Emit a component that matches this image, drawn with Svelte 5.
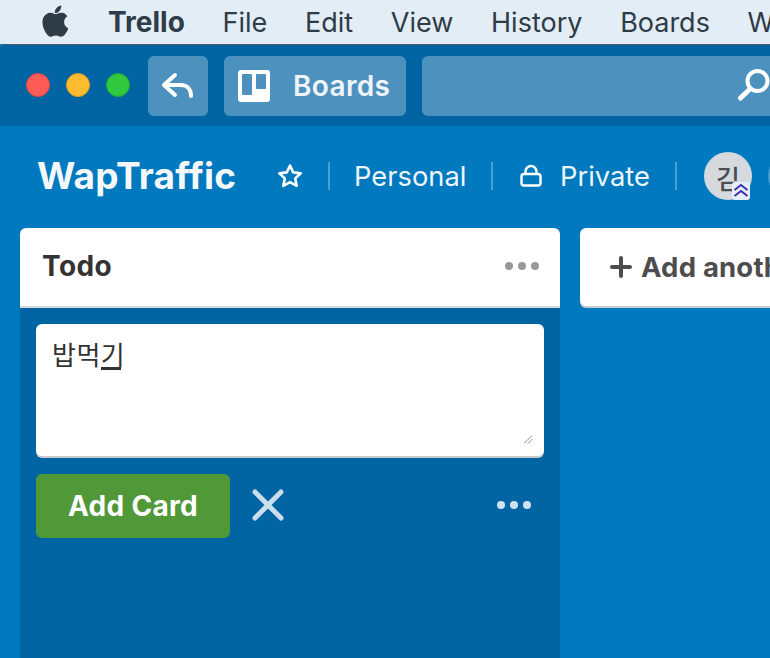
<script>
  const menus = ['File', 'Edit', 'View', 'History', 'Boards', 'Window'];
</script>

<div class="app">
  <nav class="menubar">
    <svg class="apple" width="28" height="32" viewBox="0 0 28 32"><path d="M19.3 0.5c.2 2-.6 3.9-1.700 5.300-1.200 1.400-3 2.500-4.800 2.300-.2-1.900.7-3.900 1.800-5.100C15.800 1.600 17.700.6 19.300.5zM25.500 11.200c-.2.100-3.500 2-3.400 5.900 0 4.600 4.100 6.200 4.200 6.200-.1.100-.7 2.300-2.200 4.500-1.300 1.900-2.700 3.800-4.900 3.900-2.100 0-2.800-1.300-5.200-1.300s-3.200 1.200-5.100 1.300c-2.100.1-3.700-2.100-5.100-4-2.700-3.900-4.800-11.100-2-16 1.400-2.400 3.900-3.900 6.600-4 2-.1 4 1.400 5.200 1.400 1.300 0 3.500-1.700 6-1.400 1 0 3.900.4 5.800 3.500z" fill="#2f3b46"/></svg>
    <span class="menu app-name">Trello</span>
    {#each menus as m}<span class="menu">{m}</span>{/each}
  </nav>

  <header class="topbar">
    <div class="lights">
      <i class="red"></i><i class="amber"></i><i class="green"></i>
    </div>
    <button class="tb back" aria-label="Back">
      <svg width="34" height="28" viewBox="0 0 34 28" fill="none" stroke="#fff" stroke-width="4" stroke-linecap="round" stroke-linejoin="round"><path d="M14 3 3 13l11 10M3 13h17c6 0 10 4 10 11"/></svg>
    </button>
    <button class="tb boards">
      <svg width="32" height="32" viewBox="0 0 32 32"><path fill-rule="evenodd" fill="#fff" d="M3 0h26a3 3 0 0 1 3 3v26a3 3 0 0 1-3 3H3a3 3 0 0 1-3-3V3a3 3 0 0 1 3-3zM5 4a1 1 0 0 0-1 1v19a1 1 0 0 0 1 1h8a1 1 0 0 0 1-1V5a1 1 0 0 0-1-1zM19 4a1 1 0 0 0-1 1v13a1 1 0 0 0 1 1h8a1 1 0 0 0 1-1V5a1 1 0 0 0-1-1z"/></svg>
      <span>Boards</span>
    </button>
    <div class="search">
      <svg width="34" height="34" viewBox="0 0 34 34" fill="none" stroke="#fff" stroke-linecap="round"><circle cx="20.500" cy="13" r="10" stroke-width="4"/><path d="M13 21 3.500 30" stroke-width="5"/></svg>
    </div>
  </header>

  <main class="board">
    <div class="board-head">
      <h1>WapTraffic</h1>
      <svg class="star" width="26" height="26" viewBox="0 0 26 26" fill="none" stroke="#fff" stroke-width="2.600" stroke-linejoin="round"><path d="m13 2.500 3.200 6.900 7.500.9-5.500 5.100 1.500 7.400-6.700-3.700-6.700 3.700 1.500-7.400-5.500-5.100 7.500-.9z"/></svg>
      <span class="sep sep1"></span>
      <span class="hd-text personal">Personal</span>
      <span class="sep sep2"></span>
      <svg class="lock" width="22" height="24" viewBox="0 0 22 24" fill="none" stroke="#fff" stroke-width="2.400"><rect x="1.500" y="10" width="19" height="11.500" rx="2.500"/><path d="M5.500 10V7.500a5.500 5.500 0 0 1 11 0V10"/></svg>
      <span class="hd-text private">Private</span>
      <span class="sep sep3"></span>
      <div class="avatar">
        <span class="initial">김</span>
        <div class="badge">
          <svg width="18" height="18" viewBox="0 0 18 18" fill="none" stroke="#3a2fb0" stroke-width="2"><path d="m2.500 8 6.500-5 6.500 5M2.500 14 9 9l6.500 5"/></svg>
        </div>
      </div>
      <div class="avatar second"></div>
    </div>

    <div class="lists">
      <section class="list">
        <div class="list-head">
          <h2>Todo</h2>
          <div class="dots grey"><i></i><i></i><i></i></div>
        </div>
        <div class="list-body">
          <div class="composer">
            밥먹<span class="composing">기</span>
            <svg class="grip" width="9" height="9" viewBox="0 0 9 9" stroke="#555" stroke-width="1" stroke-dasharray="1.500 .7" fill="none"><path d="M0 8.500 8.500 0M4 8.500 8.500 4"/></svg>
          </div>
          <div class="actions">
            <button class="add">Add Card</button>
            <svg class="close" width="32" height="32" viewBox="0 0 32 32" stroke="#c9dfee" stroke-width="5" stroke-linecap="round"><path d="M3 3l26 26M29 3 3 29"/></svg>
            <div class="dots light"><i></i><i></i><i></i></div>
          </div>
        </div>
      </section>
      <div class="add-list">
        <svg width="22" height="22" viewBox="0 0 22 22" stroke="#4d4d4d" stroke-width="4" stroke-linecap="round"><path d="M11 2v18M2 11h18"/></svg>
        <span>Add another list</span>
      </div>
    </div>
  </main>
</div>

<style>
  :global(body) { margin: 0; background: #0079bf; }
  .app { width: 770px; height: 658px; overflow: hidden; display: flex; flex-direction: column; font-family: Inter, "Noto Sans CJK KR", sans-serif; }

  .menubar { height: 44px; flex: none; box-sizing: border-box; background: #e3edf6; display: flex; align-items: center; white-space: nowrap; padding-left: 42px; }
  .apple { flex: none; margin-right: 38px; margin-top: -2px; }
  .menu { font-size: 27px; color: #2f3b46; margin-right: 37.700px; flex: none; }
  .app-name { font-weight: 700; font-size: 28px; }

  .topbar { height: 82px; flex: none; box-sizing: border-box; background: #0164a3; border-top: 1px solid #4a5a68; border-top-left-radius: 6px; display: flex; align-items: flex-start; padding: 11px 0 0 26px; gap: 16px; overflow: hidden; }
  .lights { display: flex; gap: 16px; margin-top: 17px; margin-right: 2px; }
  .lights i { width: 24px; height: 24px; border-radius: 50%; display: block; box-sizing: border-box; }
  .red { background: #fc5b57; border: 1px solid #e3443f; }
  .amber { background: #fdbb2f; border: 1px solid #e09e1e; }
  .green { background: #32c840; border: 1px solid #1fad2d; }
  .tb { border: 0; background: #4d92bf; border-radius: 6px; height: 60px; display: flex; align-items: center; padding: 0; color: #f0f4f8; font: inherit; flex: none; }
  .back { width: 60px; justify-content: center; }
  .boards { width: 182px; padding-left: 14px; gap: 23px; font-size: 28px; font-weight: 600; letter-spacing: 0.35px; box-sizing: border-box; }
  .search { width: 500px; height: 60px; flex: none; background: #4d92bf; border-radius: 6px; position: relative; }
  .search svg { position: absolute; left: 315px; top: 12px; }

  .board { flex: 1; background: #0079bf; min-height: 0; display: flex; flex-direction: column; }
  .board-head { height: 102px; flex: none; display: flex; align-items: center; position: relative; padding: 0 0 2px 37px; box-sizing: border-box; white-space: nowrap; color: #fff; }
  h1 { margin: -1px 0 0; font-size: 37px; font-weight: 650; letter-spacing: 0.25px; color: #f4f8fb; width: 240px; flex: none; }
  .star { flex: none; margin-right: 25px; }
  .sep { width: 2px; height: 28px; background: #4d9fd2; flex: none; }
  .hd-text { font-size: 27.300px; color: #eef5fa; flex: none; }
  .personal { margin: 0 26px 0 24px; width: 111px; }
  .lock { flex: none; margin: 0 18px 0 27px; }
  .private { width: 89px; }
  .sep3 { margin: 0 27px 0 26px; }
  .avatar { width: 48px; height: 48px; border-radius: 50%; background: #d6dadf; flex: none; position: relative; display: flex; align-items: center; justify-content: center; font-size: 26px; color: #4a4f55; font-weight: 500; }
  .initial { padding-top: 2px; }
  .avatar.second { margin-left: 16px; background: #4d9fd2; }
  .badge { position: absolute; right: 2px; bottom: 0; width: 18px; height: 18px; background: #e8eef6; border-radius: 3px; display: flex; }

  .lists { flex: 1; min-height: 0; display: flex; gap: 20px; padding-left: 20px; align-items: flex-start; }
  .list { width: 540px; flex: none; align-self: stretch; height: 430px; background: #0164a3; border-radius: 6px 6px 0 0; }
  .list-head { height: 80px; box-sizing: border-box; background: #fff; border-bottom: 2px solid #d6d9dc; border-radius: 6px 6px 0 0; display: flex; align-items: center; justify-content: space-between; padding: 0 21px 2px 22px; }
  h2 { margin: 0; font-size: 28px; font-weight: 700; letter-spacing: 0.4px; color: #333; }
  .dots { display: flex; gap: 5px; }
  .dots i { width: 8px; height: 8px; border-radius: 50%; display: block; }
  .grey i { background: #999; }
  .light i { background: #cfe2f0; }
  .list-body { padding: 16px 16px 0; }
  .composer { height: 132px; box-sizing: border-box; background: #fff; border-radius: 6px; box-shadow: 0 2px 0 #c8cbce; padding: 13px 16px; font-size: 26px; letter-spacing: 0.5px; line-height: 34px; color: #333; font-family: "Noto Sans CJK KR", sans-serif; font-weight: 400; position: relative; }
  .composing { display: inline-block; width: 20px; height: 27px; line-height: 27px; border-bottom: 3px solid #333; white-space: nowrap; }
  .grip { position: absolute; right: 11px; bottom: 12px; }
  .actions { display: flex; align-items: center; margin-top: 18px; }
  .add { width: 194px; height: 64px; border: 0; border-radius: 6px; background: #519839; color: #fff; font: 700 28px Inter, sans-serif; letter-spacing: 0.3px; padding: 0; }
  .close { margin-left: 22px; margin-top: -2px; }
  .light { margin-left: auto; margin-right: 13px; margin-top: -2px; }
  .add-list { width: 540px; height: 78px; flex: none; background: #fff; border-radius: 6px; box-shadow: 0 2px 0 #c8cbce; display: flex; align-items: center; gap: 9px; padding-left: 30px; box-sizing: border-box; font-size: 27.500px; font-weight: 700; letter-spacing: 0.2px; color: #4d4d4d; white-space: nowrap; }
</style>
